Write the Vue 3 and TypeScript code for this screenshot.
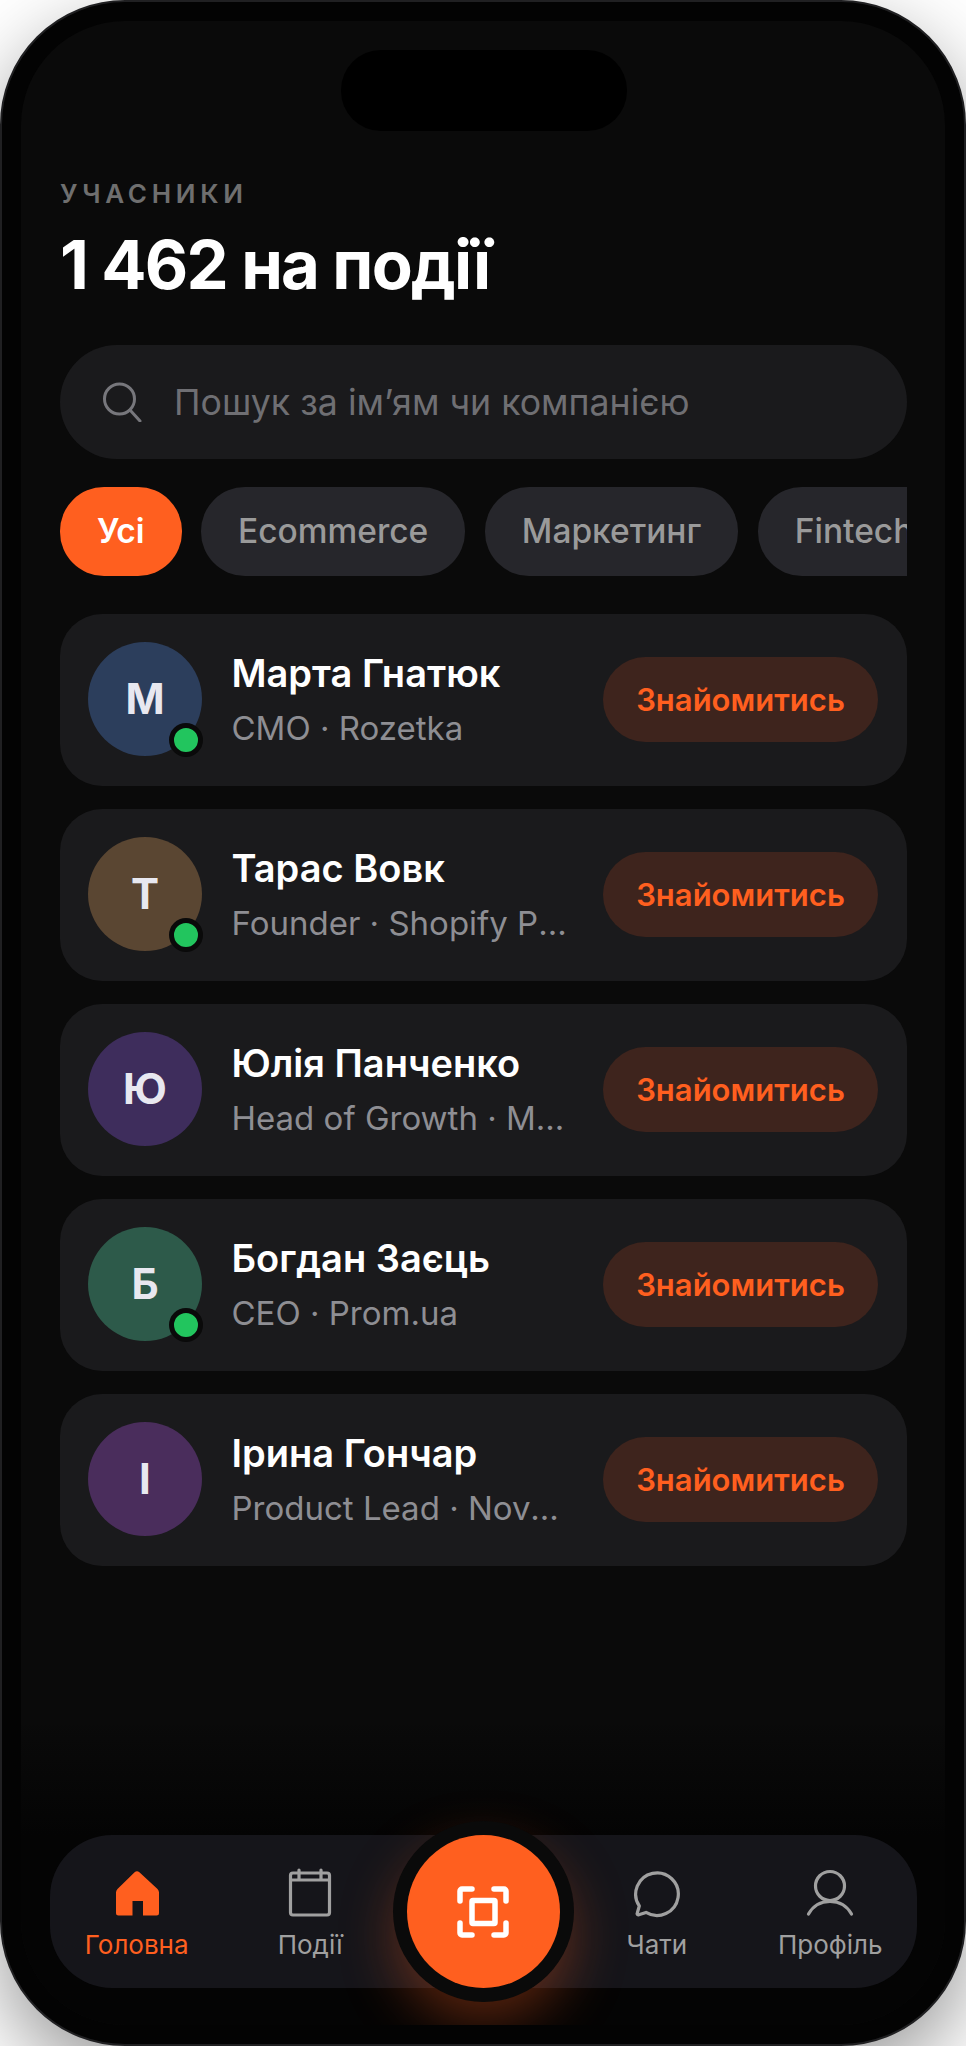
<script setup lang="ts">
type Member = {
  name: string
  role: string
  initial: string
  color: string
  online: boolean
}

const chips = ['Усі', 'Ecommerce', 'Маркетинг', 'Fintech']

const members: Member[] = [
  { name: 'Марта Гнатюк', role: 'CMO · Rozetka', initial: 'М', color: '#2c3e5c', online: true },
  { name: 'Тарас Вовк', role: 'Founder · Shopify Partners', initial: 'Т', color: '#5a4632', online: true },
  { name: 'Юлія Панченко', role: 'Head of Growth · MacPaw', initial: 'Ю', color: '#3e2d5c', online: false },
  { name: 'Богдан Заєць', role: 'CEO · Prom.ua', initial: 'Б', color: '#2d5a4a', online: true },
  { name: 'Ірина Гончар', role: 'Product Lead · Nova Poshta', initial: 'І', color: '#4a2d5c', online: false },
]
</script>

<template>
  <div class="phone">
    <div class="screen">
      <div class="notch"></div>
      <main class="content">
        <div class="eyebrow">УЧАСНИКИ</div>
        <h1 class="title">1 462 на події</h1>

        <div class="search">
          <svg class="search-icon" viewBox="0 0 40 40" fill="none" stroke="#77777c" stroke-width="3" stroke-linecap="round">
            <circle cx="17.5" cy="17" r="15" />
            <path d="M28 28l10 11" />
          </svg>
          <span>Пошук за ім’ям чи компанією</span>
        </div>

        <div class="chips">
          <div v-for="(chip, index) in chips" :key="chip" class="chip" :class="{ active: index === 0 }">
            {{ chip }}
          </div>
        </div>

        <div class="list">
          <div v-for="item in members" :key="item.name" class="card">
            <div class="avatar" :style="{ backgroundColor: item.color }">
              {{ item.initial }}
              <span v-if="item.online" class="online"></span>
            </div>
            <div class="info">
              <div class="name">{{ item.name }}</div>
              <div class="role">{{ item.role }}</div>
            </div>
            <button class="meet">Знайомитись</button>
          </div>
        </div>
      </main>

      <div class="dock">
        <nav class="nav">
          <div class="nav-item active">
            <svg viewBox="0 0 52 52" fill="#ff5f1f">
              <path d="M23.6 5.2a3.6 3.6 0 0 1 4.8 0L46.5 22a5 5 0 0 1 1.5 3.6V46a2.5 2.5 0 0 1-2.5 2.5H32V34H21.500v14.500H7.500A2.500 2.500 0 0 1 5 46V25.600A5 5 0 0 1 6.500 22z" />
            </svg>
            <span>Головна</span>
          </div>
          <div class="nav-item">
            <svg viewBox="0 0 52 52" fill="none" stroke="#a0a0a0" stroke-width="3.2" stroke-linecap="round" stroke-linejoin="round">
              <rect x="6.500" y="6" width="39" height="42" rx="2.500" />
              <path d="M6.500 13h39M15 3v9M37 3v9" />
            </svg>
            <span>Події</span>
          </div>
          <div class="fab-cell">
            <button class="fab">
              <svg viewBox="0 0 52 52" fill="none" stroke="#fff" stroke-width="5.500" stroke-linecap="round" stroke-linejoin="round">
                <path d="M3 15V5a2 2 0 0 1 2-2h10M37 3h10a2 2 0 0 1 2 2v10M49 37v10a2 2 0 0 1-2 2H37M15 49H5a2 2 0 0 1-2-2V37" />
                <rect x="15" y="14.500" width="23" height="23" rx="1" />
              </svg>
            </button>
          </div>
          <div class="nav-item">
            <svg viewBox="0 0 52 52" fill="none" stroke="#a0a0a0" stroke-width="3.200" stroke-linecap="round" stroke-linejoin="round">
              <path d="M15 45.400A21.300 21.300 0 1 0 8.300 39L6.200 46.200a1.200 1.200 0 0 0 1.600 1.500z" />
            </svg>
            <span>Чати</span>
          </div>
          <div class="nav-item">
            <svg viewBox="0 0 52 52" fill="none" stroke="#a0a0a0" stroke-width="3.200" stroke-linecap="round" stroke-linejoin="round">
              <circle cx="26" cy="19" r="14.500" />
              <path d="M4.500 47C9 39 17 34.500 26 34.500S43 39 47.500 47" />
            </svg>
            <span>Профіль</span>
          </div>
        </nav>
      </div>
    </div>
  </div>
</template>

<style>
body {
  background: #fff;
}
</style>

<style scoped>
.phone {
  box-sizing: border-box;
  width: 966px;
  height: 2046px;
  padding: 19px;
  background: #030303;
  border: 2px solid #202022;
  border-radius: 125px;
  box-shadow: 0 30px 80px rgba(0, 0, 0, 0.4);
  font-family: Inter, 'Noto Sans', sans-serif;
}

.screen {
  position: relative;
  display: flex;
  flex-direction: column;
  height: 100%;
  overflow: hidden;
  background: #0a0a0a;
  border-radius: 104px;
}

.notch {
  position: absolute;
  top: 29px;
  left: 319.500px;
  width: 286px;
  height: 81px;
  border-radius: 40px;
  background: #000;
}

.content {
  flex: 1;
  padding: 158px 38px 0 39px;
}

.eyebrow {
  font-size: 26px;
  line-height: 30px;
  font-weight: 600;
  letter-spacing: 4.700px;
  color: #6f6f6f;
}

.title {
  margin: 16px 0 0;
  font-size: 67px;
  line-height: 80px;
  font-weight: 700;
  letter-spacing: -1.750px;
  color: #fff;
}

.search {
  display: flex;
  align-items: center;
  gap: 32px;
  height: 114px;
  margin-top: 40px;
  padding: 0 42px;
  background: #1a1a1c;
  border-radius: 57px;
  font-size: 35.700px;
  color: #6f6f73;
}

.search-icon {
  flex-shrink: 0;
  width: 40px;
  height: 40px;
}

.chips {
  display: flex;
  gap: 19.500px;
  margin-top: 28px;
  overflow: hidden;
}

.chip {
  flex-shrink: 0;
  height: 89px;
  padding: 0 37px;
  border-radius: 44px;
  background: #26262b;
  font-size: 33.500px;
  font-weight: 500;
  line-height: 89px;
  color: #9a9a9a;
}

.chip.active {
  background: #ff5f1f;
  color: #fff;
  font-weight: 600;
}

.list {
  display: flex;
  flex-direction: column;
  gap: 23.500px;
  margin-top: 38px;
}

.card {
  box-sizing: border-box;
  display: flex;
  align-items: center;
  height: 171.500px;
  padding: 0 29px 1px 28px;
  background: #1a1a1c;
  border-radius: 42px;
}

.avatar {
  position: relative;
  flex-shrink: 0;
  width: 114px;
  height: 114px;
  border-radius: 50%;
  font-size: 42px;
  font-weight: 700;
  line-height: 114px;
  text-align: center;
  color: #e8e8f0;
}

.online {
  position: absolute;
  right: -1px;
  bottom: -1px;
  box-sizing: border-box;
  width: 34px;
  height: 34px;
  background: #22c55e;
  border: 5px solid #0a0a0a;
  border-radius: 50%;
}

.info {
  flex: 1;
  min-width: 0;
  margin: 0 30px 0 29.500px;
}

.name {
  font-size: 38px;
  line-height: 46px;
  font-weight: 600;
  color: #fff;
  white-space: nowrap;
  overflow: hidden;
  text-overflow: ellipsis;
}

.role {
  margin-top: 10.500px;
  font-size: 33px;
  line-height: 42px;
  color: #8e8e93;
  white-space: nowrap;
  overflow: hidden;
  text-overflow: ellipsis;
}

.meet {
  flex-shrink: 0;
  width: 275px;
  height: 85px;
  padding: 0;
  border: none;
  border-radius: 43px;
  background: #3e241d;
  font-family: inherit;
  font-size: 31px;
  font-weight: 600;
  color: #ff5f1f;
}

.dock {
  margin-top: -80px;
  padding: 116px 28px 37px 29px;
  background: linear-gradient(to bottom, #0a0a0a00, #040404 116px);
}

.nav {
  display: grid;
  grid-template-columns: repeat(5, 1fr);
  height: 153px;
  background: #15151a;
  border-radius: 62px;
}

.nav-item {
  display: flex;
  flex-direction: column;
  align-items: center;
  padding-top: 32px;
  font-size: 26px;
  line-height: 32px;
  color: #a0a0a0;
}

.nav-item.active {
  color: #ff5f1f;
}

.nav-item svg {
  width: 52px;
  height: 52px;
  margin-bottom: 10px;
}

.fab-cell {
  display: flex;
  justify-content: center;
}

.fab {
  flex-shrink: 0;
  display: flex;
  align-items: center;
  justify-content: center;
  width: 153px;
  height: 153px;
  padding: 0;
  border: none;
  border-radius: 50%;
  background: #ff5f1f;
  box-shadow: 0 0 0 14px #0a0a0a, 0 24px 56px 10px rgba(255, 95, 31, 0.35);
}

.fab svg {
  width: 52px;
  height: 52px;
}
</style>
